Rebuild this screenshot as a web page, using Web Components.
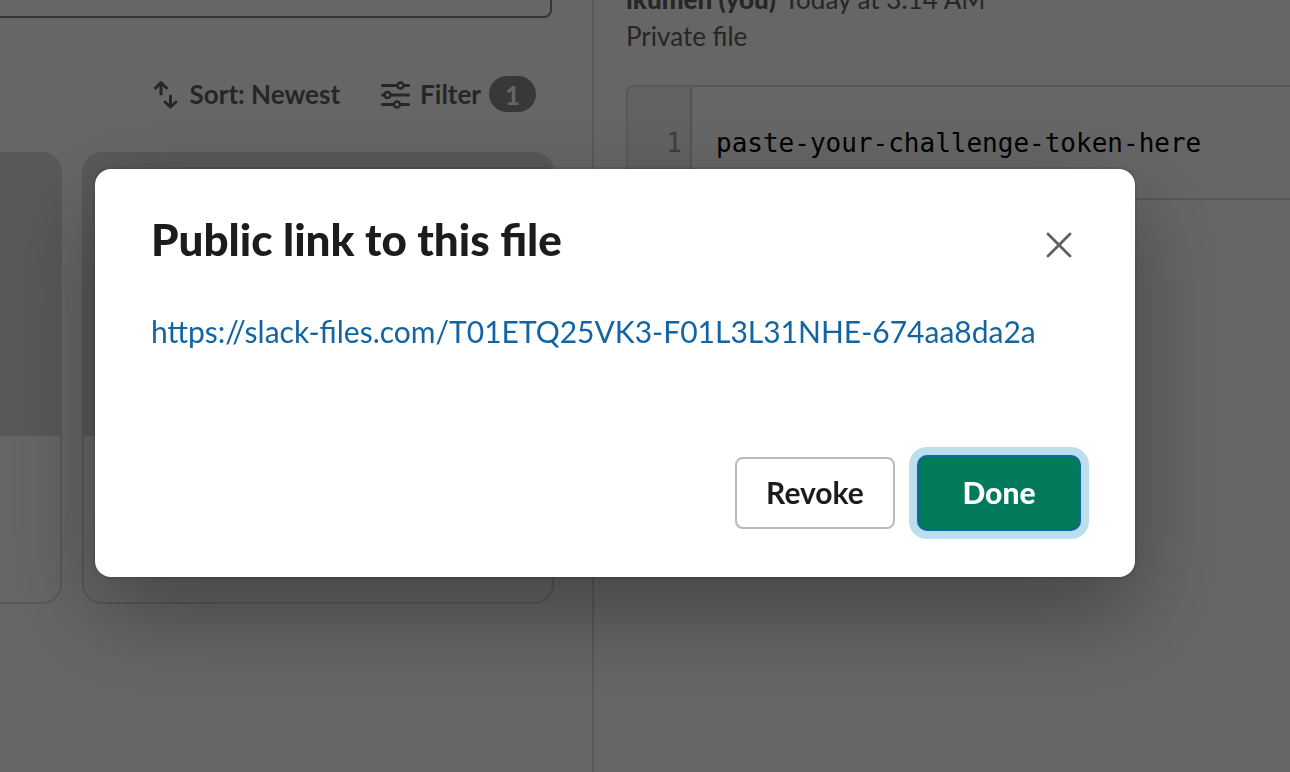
<!DOCTYPE html>
<html lang="en">
<head>
<meta charset="utf-8">
<title>Public link to this file</title>
<style>
html, body { margin: 0; height: 100%; }
body { font-family: Lato, "Liberation Sans", sans-serif; font-size: 26px; line-height: 36px; color: #1d1c1d; background: #fff; overflow: hidden; }
</style>
</head>
<body>
<files-app></files-app>
<script>
function define(name, html) {
  const template = document.createElement('template');
  template.innerHTML = html;
  customElements.define(name, class extends HTMLElement {
    constructor() {
      super();
      this.attachShadow({ mode: 'open' }).append(template.content.cloneNode(true));
    }
  });
}

define('file-card', `
<style>
:host { display: flex; flex-direction: column; box-sizing: border-box; height: 452px; border: 2px solid #dddddd; border-radius: 20px; overflow: hidden; background: #fff; }
.thumb { height: 282px; background: #dddddd; }
</style>
<div class="thumb"></div><slot></slot>`);

define('tool-button', `
<style>
:host { display: block; }
button { display: flex; align-items: center; gap: 8px; padding: 0; border: 0; background: none; font: inherit; font-weight: 700; color: #616061; white-space: nowrap; }
</style>
<button type="button"><slot name="icon"></slot><slot></slot><slot name="count"></slot></button>`);

define('count-badge', `
<style>
:host { display: block; box-sizing: border-box; width: 47px; height: 36px; border-radius: 18px; background: #8d8d8d; color: #fff; text-align: center; line-height: 38px; }
</style>
<slot></slot>`);

define('file-list', `
<style>
:host { display: block; box-sizing: border-box; width: 594px; flex: none; border-right: 2px solid #dddddd; padding-right: 38px; overflow: hidden; }
input { display: block; box-sizing: border-box; width: calc(100% + 16px); height: 72px; margin: -54px 0 0 -18px; border: 2px solid #868686; border-radius: 8px; background: #fff; font: inherit; }
.tools { display: flex; justify-content: flex-end; gap: 40px; margin: 58px 18px 40px 0; }
.cards { display: grid; grid-template-columns: 472px 472px; justify-content: end; gap: 20px; }
svg { display: block; }
</style>
<input type="search" aria-label="Search files">
<div class="tools">
  <tool-button>
    <svg slot="icon" width="30" height="32" viewBox="0 -2 30 32" fill="none" stroke="#616061" stroke-width="3" stroke-linecap="round" stroke-linejoin="round"><path d="M9 14V3M3.500 8L9 2.500L14.500 8M18.500 16V27M13 22L18.500 27L24 22"/></svg>
    Sort: Newest
  </tool-button>
  <tool-button>
    <svg slot="icon" width="32" height="32" viewBox="0 -2 32 32" fill="none" stroke="#616061" stroke-width="3" stroke-linecap="round"><path d="M2.500 5.500H17M24 5.500H28.500M2.500 15H4M11 15H28.500M2.500 24.500H13.500M20.500 24.500H28.500"/><g stroke-width="2.500"><circle cx="20.500" cy="5.500" r="3"/><circle cx="7.500" cy="15" r="3"/><circle cx="17" cy="24.500" r="3"/></g></svg>
    Filter
    <count-badge slot="count">1</count-badge>
  </tool-button>
</div>
<div class="cards"><file-card></file-card><file-card></file-card></div>`);

define('code-snippet', `
<style>
:host { display: flex; border: 2px solid #dddddd; border-right: 0; border-radius: 8px 0 0 8px; overflow: hidden; font-family: "DejaVu Sans Mono", monospace; line-height: 38px; }
.gutter { box-sizing: border-box; width: 64px; flex: none; padding: 37px 8px 36px; text-align: right; background: #f4f4f4; border-right: 2px solid #d0d0d0; color: #9a9a9a; }
code { font: inherit; padding: 37px 24px 36px; white-space: pre; color: #000; }
</style>
<div class="gutter">1</div><code><slot></slot></code>`);

define('file-details', `
<style>
:host { display: block; flex: 1; min-width: 0; padding-left: 32px; color: #616061; }
.meta { margin-top: -19px; line-height: 37px; }
b { color: #616061; font-weight: 900; margin-right: 8px; }
code-snippet { margin-top: 31px; }
</style>
<div class="meta"><b>ikumen (you)</b>Today at 3:14 AM</div>
<div>Private file</div>
<code-snippet>paste-your-challenge-token-here</code-snippet>`);

define('modal-button', `
<style>
:host { display: block; }
button { display: block; box-sizing: border-box; min-width: 160px; height: 72px; padding: 0 28px 2px; border: 2px solid #bbbabb; border-radius: 8px; background: #fff; color: #1d1c1d; font: inherit; font-size: 30px; font-weight: 700; }
:host([primary]) button { font-family: "Lato Black", Lato, sans-serif; font-weight: 900; color: #fff; background: #007a5a; border-color: #007a5a; box-shadow: 0 0 0 2px #1264a3, 0 0 0 10px #bbdfee; }
</style>
<button type="button"><slot></slot></button>`);

define('modal-dialog', `
<style>
:host { position: fixed; inset: 0; box-sizing: border-box; padding: 169px 155px 0 95px; background: rgba(0,0,0,.6); }
section { box-sizing: border-box; padding: 40px 56px 48px; border-radius: 16px; background: #fff; box-shadow: 0 0 0 2px rgba(29,28,29,.13), 0 36px 96px rgba(0,0,0,.35); }
header { display: flex; justify-content: space-between; align-items: flex-start; }
h1 { margin: 0; font-family: "Lato Black", Lato, sans-serif; font-size: 44px; line-height: 60px; font-weight: 900; }
.close { display: flex; padding: 7px; border: 0; background: none; margin-top: 16px; }
.body { margin-top: 42px; font-size: 30px; line-height: 40px; }
footer { display: flex; justify-content: flex-end; gap: 24px; margin-top: 106px; }
</style>
<section role="dialog" aria-modal="true" aria-labelledby="title">
  <header><h1 id="title"><slot name="title"></slot></h1>
    <button class="close" type="button" aria-label="Close"><svg width="26" height="26" viewBox="0 0 26 26" fill="none" stroke="#616061" stroke-width="2.800" stroke-linecap="round"><path d="M2 2L24 24M24 2L2 24"/></svg></button>
  </header>
  <div class="body"><slot></slot></div>
  <footer><slot name="actions"></slot></footer>
</section>`);

define('files-app', `
<style>
:host { display: flex; min-height: 100vh; }
a { color: #1264a3; text-decoration: none; }
</style>
<file-list></file-list>
<file-details></file-details>
<modal-dialog>
  <span slot="title">Public link to this file</span>
  <a href="https://slack-files.com/T01ETQ25VK3-F01L3L31NHE-674aa8da2a">https://slack-files.com/T01ETQ25VK3-F01L3L31NHE-674aa8da2a</a>
  <modal-button slot="actions">Revoke</modal-button>
  <modal-button slot="actions" primary>Done</modal-button>
</modal-dialog>`);
</script>
</body>
</html>
